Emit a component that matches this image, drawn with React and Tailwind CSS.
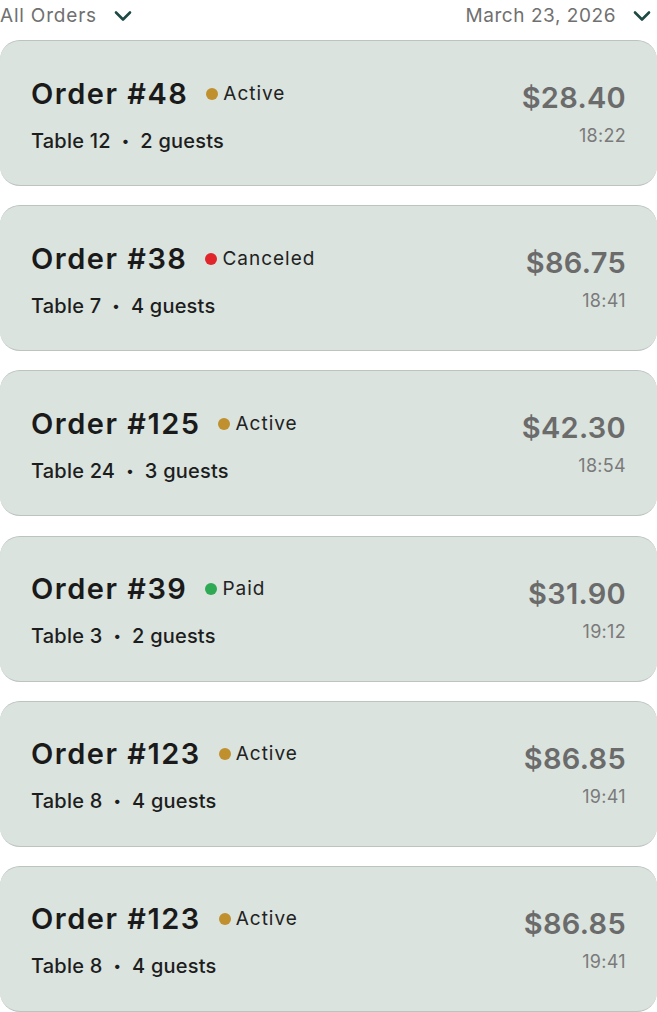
import React from "react";

const orders = [
  { id: 48, status: "Active", table: 12, guests: 2, price: "$28.40", time: "18:22" },
  { id: 38, status: "Canceled", table: 7, guests: 4, price: "$86.75", time: "18:41" },
  { id: 125, status: "Active", table: 24, guests: 3, price: "$42.30", time: "18:54" },
  { id: 39, status: "Paid", table: 3, guests: 2, price: "$31.90", time: "19:12" },
  { id: 123, status: "Active", table: 8, guests: 4, price: "$86.85", time: "19:41" },
  { id: 123, status: "Active", table: 8, guests: 4, price: "$86.85", time: "19:41" },
];

const dot = {
  Active: "bg-[#c0902f]",
  Canceled: "bg-[#e0262b]",
  Paid: "bg-[#2eaa55]",
};

function Chevron() {
  return (
    <svg width="18" height="12" viewBox="0 0 18 12" fill="none">
      <path d="M2 2.5 L9 9.5 L16 2.5" stroke="#1e4a45" strokeWidth="2.6" strokeLinecap="round" strokeLinejoin="round" />
    </svg>
  );
}

export default function App() {
  return (
    <div className="w-[657px] h-[1012px] bg-white overflow-hidden" style={{ fontFamily: "Inter, 'Noto Sans', sans-serif" }}>
      <div className="h-[40px] flex items-start justify-between pt-[3px]">
        <div className="flex items-center gap-[17px]">
          <span className="text-[19px] text-[#707070] leading-[26px] tracking-[0.8px]">All Orders</span>
          <Chevron />
        </div>
        <div className="flex items-center gap-[17px] pr-[6px]">
          <span className="text-[19px] text-[#707070] leading-[26px] tracking-[0.55px]">March 23, 2026</span>
          <Chevron />
        </div>
      </div>
      <div className="flex flex-col gap-[19.2px]">
        {orders.map((o, i) => (
          <div
            key={i}
            className="h-[146px] rounded-[20px] bg-[#dae3de] border-y border-[#bcc4c0] flex items-center justify-between pl-[31px] pr-[31px]"
          >
            <div className="flex flex-col gap-[18px] pt-[3px]">
              <div className="flex items-center">
                <span className="text-[29px] font-semibold text-[#1a1a1a] leading-[34px] tracking-[1.5px]">Order #{o.id}</span>
                <span className={`ml-[18px] w-[12px] h-[12px] rounded-full ${dot[o.status]}`} />
                <span className="ml-[5px] text-[19px] text-[#222] leading-[24px] tracking-[1px]">{o.status}</span>
              </div>
              <div className="flex items-center text-[20px] font-medium text-[#1d1d1d] leading-[24px] tracking-[0.2px]">
                <span>Table {o.table}</span>
                <span className="mx-[11px] text-[14px]">•</span>
                <span>{o.guests} guests</span>
              </div>
            </div>
            <div className="flex flex-col items-end gap-[10px] pt-[2px]">
              <span className="text-[29px] font-semibold text-[#6b6b6b] leading-[34px] tracking-[0.3px]">{o.price}</span>
              <span className="text-[18px] text-[#7a7a7a] leading-[22px] tracking-[0.3px]">{o.time}</span>
            </div>
          </div>
        ))}
      </div>
    </div>
  );
}
